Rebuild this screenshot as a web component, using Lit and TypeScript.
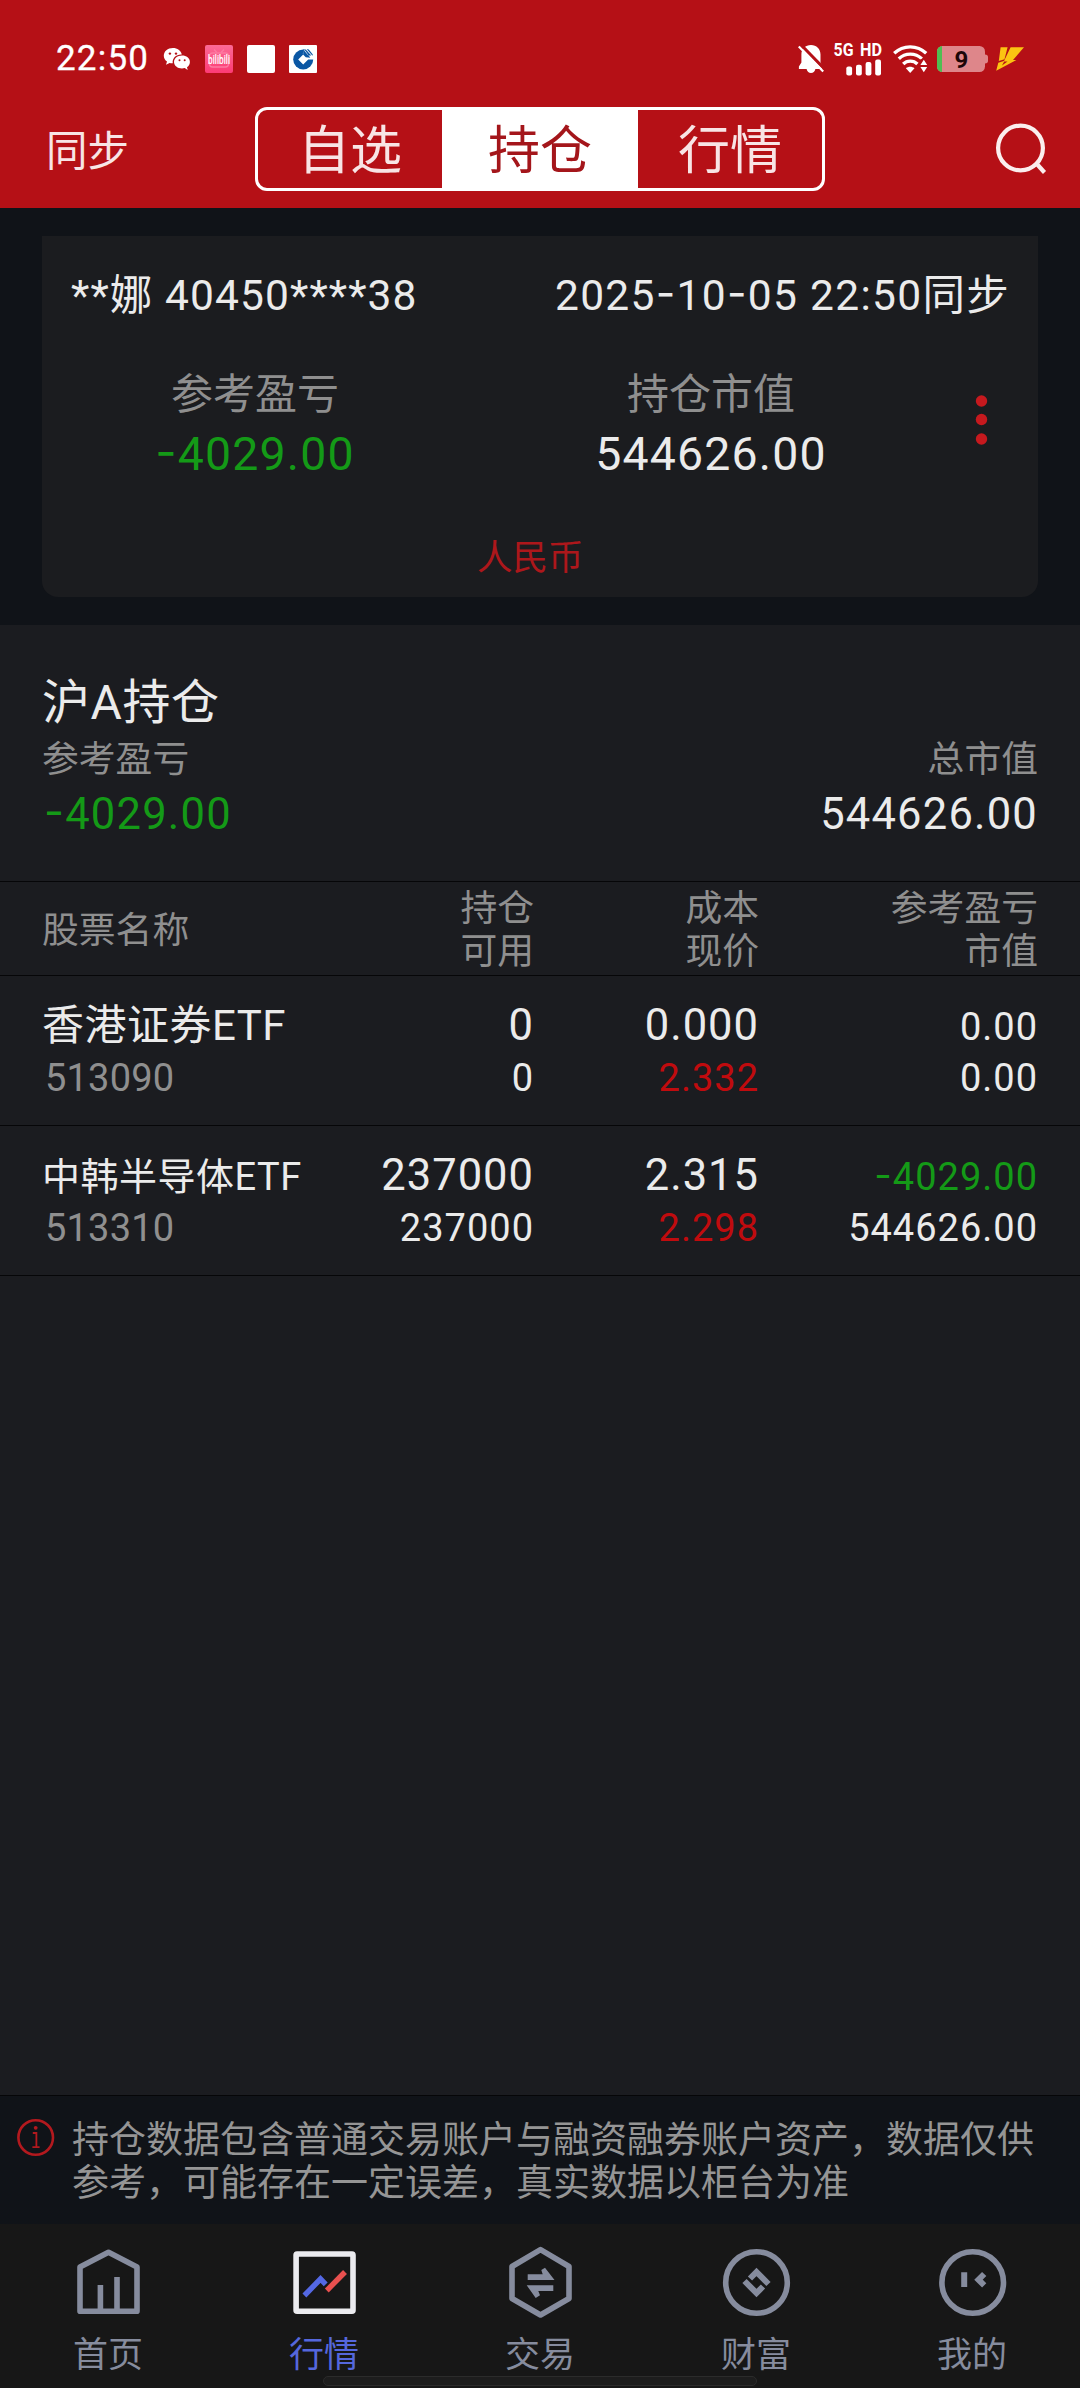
import { LitElement, html, css, svg } from "lit";
import { customElement, property } from "lit/decorators.js";
import { classMap } from "lit/directives/class-map.js";

const shared = css`
  :host,
  * {
    box-sizing: border-box;
  }
  svg {
    display: block;
    flex: none;
    overflow: visible;
  }
  .minus {
    font-family: Inter, Roboto, sans-serif;
    vertical-align: 0.04em;
    line-height: 0;
  }
  .fall {
    color: #149a17;
  }
  .rise {
    color: #c00b0e;
  }
`;

/** Sets hyphens in the wider dash that figures use. */
const figures = (text: string) =>
  text.split(/(-)/).map((part) => (part === "-" ? html`<span class="minus">-</span>` : part));

@customElement("status-bar")
class StatusBar extends LitElement {
  static styles = [
    shared,
    css`
      :host {
        display: flex;
        align-items: center;
        height: 100px;
        padding: 17px 56px 0 56px;
        color: #fff;
      }
      .time {
        font-size: 35px;
        letter-spacing: 1.2px;
        line-height: 40px;
        width: 107px;
        padding-top: 1px;
        -webkit-text-stroke: 0.3px #fff;
      }
      .apps {
        display: flex;
        align-items: center;
        gap: 14px;
      }
      .system {
        display: flex;
        align-items: center;
        margin-left: auto;
      }
      .net {
        margin-left: 9px;
      }
      .wifi {
        margin-left: 10px;
      }
      .battery {
        margin-left: 9px;
      }
      .bolt {
        margin-left: 8px;
      }
    `,
  ];

  render() {
    return html`
      <div class="time">22:50</div>
      <div class="apps">
        <svg width="28" height="28" viewBox="0 0 28 28">
          <path fill="#fff" d="M9.900 3C4.700 3 .8 6.400 .8 10.700c0 2.500 1.200 4.500 3.200 5.900l-1 3.200 3.600-1.900c1.100.3 2.200.5 3.200.4-.9-5.100 3.400-9.200 9-8.900C18 5.600 14.300 3 9.900 3z"/>
          <path fill="#fff" d="M26.900 17c0-3.700-3.500-6.400-7.900-6.400s-8 2.800-8 6.400 3.600 6.500 8 6.500c.9 0 1.800-.2 2.700-.4l3 1.800-.7-2.700c1.800-1.200 2.900-3 2.900-5.200z"/>
          <g fill="#b51016"><circle cx="6.900" cy="8.600" r="1.200"/><circle cx="13" cy="8.600" r="1.200"/><circle cx="16.500" cy="15.300" r="1"/><circle cx="21.700" cy="15.300" r="1"/></g>
        </svg>
        <svg width="28" height="28" viewBox="0 0 28 28">
          <defs><linearGradient id="p" x1="0" y1="0" x2="0" y2="1"><stop offset="0" stop-color="#fb6a95"/><stop offset="1" stop-color="#fd3b75"/></linearGradient></defs>
          <rect width="28" height="28" rx="2" fill="url(#p)"/>
          <g fill="none" stroke="#fd7aa1" stroke-width="1.300"><rect x="4.500" y="8" width="19" height="14" rx="3"/><path d="M9 4.500l3 3M19 4.500l-3 3"/></g>
          <text x="3" y="19" textLength="22" lengthAdjust="spacingAndGlyphs" font-family="Roboto, sans-serif" font-weight="500" font-size="12" fill="#fff">bilibili</text>
        </svg>
        <svg width="28" height="28" viewBox="0 0 28 28"><rect width="28" height="28" rx="2" fill="#fff"/></svg>
        <svg width="28" height="28" viewBox="0 0 28 28">
          <rect width="28" height="28" rx="1" fill="#fff"/>
          <circle cx="14.200" cy="14.500" r="10" fill="#0a57a4"/>
          <path fill="#fff" d="M14.200 9.600l5 5-5 5-5-5zM17 12.200l-3.200-3.800L15.500 3h11v11.400H19z"/>
          <path fill="#0a57a4" d="M14.300 4.500l2.400-.1 5.600 6.200h-3z M17.600 4.100l2.200.5 4 4.800-.3 1.300z M14.200 4.500v5l2.600 2.700 4.500.6-5-7z"/>
        </svg>
      </div>
      <div class="system">
        <svg width="26" height="30" viewBox="0 0 26 30">
          <path fill="#fff" d="M13 1c-5.500 0-9.600 4-9.600 9.400v8.200L.9 22.600v2.300h7.700c.6 2.400 2.200 4.100 4.400 4.100s3.800-1.700 4.400-4.100h7.200v-2.300l-2.100-4v-8.200C22.500 5 18.500 1 13 1z"/>
          <path stroke="#b51016" stroke-width="3" d="M2.800 .6l24 24.800"/>
          <path stroke="#fff" stroke-width="2.200" d="M.8 2.600l24.400 24.800"/>
        </svg>
        <svg class="net" width="50" height="36" viewBox="0 0 50 36">
          <text x=".5" y="14.800" textLength="20" lengthAdjust="spacingAndGlyphs" font-family="Roboto, sans-serif" font-weight="700" font-size="18.500" fill="#fff">5G</text>
          <text x="27" y="14.800" textLength="22" lengthAdjust="spacingAndGlyphs" font-family="Roboto, sans-serif" font-weight="700" font-size="18.500" fill="#fff">HD</text>
          <g fill="#fff"><rect x="13.300" y="25.500" width="5.800" height="9" rx="2"/><rect x="23" y="23.700" width="5.800" height="10.800" rx="2"/><rect x="32.600" y="21.100" width="5.800" height="13.400" rx="2"/><rect x="42.200" y="18.500" width="5.800" height="16" rx="2"/></g>
        </svg>
        <svg class="wifi" width="35" height="28" viewBox="0 0 35 28">
          <g fill="none" stroke="#fff" stroke-width="3.300"><path d="M1.200 8.300a23 23 0 0 1 32 0"/><path d="M5.800 13.800a16.500 16.500 0 0 1 23 0"/><path d="M10.200 19a10 10 0 0 1 14.200 0"/></g>
          <path fill="#fff" d="M17.200 28l-4.300-4.800c2.500-2 6.100-2 8.600 0z"/>
          <path d="M26.500 28V14.500l9-1v14.500z" fill="#b51016"/>
          <path fill="#fff" d="M30.800 14.800l3.400 5.200h-6.800zM30.800 27.200l3.400-5.200h-6.800z"/>
        </svg>
        <svg class="battery" width="51" height="26" viewBox="0 0 51 26">
          <defs><clipPath id="b"><rect width="48" height="26" rx="5.500"/></clipPath></defs>
          <g clip-path="url(#b)"><rect width="48" height="26" fill="#de868a"/><rect width="5" height="26" fill="#4fbe52"/></g>
          <path d="M48 8.500c2 0 3 1 3 2.500v4c0 1.500-1 2.500-3 2.500z" fill="#de868a"/>
          <text x="24.400" y="22" text-anchor="middle" font-family="Roboto, sans-serif" font-weight="700" font-size="24" fill="#1d0608">9</text>
        </svg>
        <svg class="bolt" width="28" height="24" viewBox="0 0 28 24">
          <path fill="#fbc412" d="M4.600 .3h7L8.500 12.200 2.800 14zM14.600 .3H28L17 13h3.400L.2 23.700 2.300 15.700l6.300-2L6 18.400l5.500-4H7.800z"/>
        </svg>
      </div>
    `;
  }
}

@customElement("app-header")
class AppHeader extends LitElement {
  static styles = [
    shared,
    css`
      :host {
        display: flex;
        align-items: center;
        height: 108px;
        padding: 0 33px 10px 46px;
        color: #f8e4e5;
      }
      .sync {
        width: 209px;
        font-size: 41.500px;
        line-height: 60px;
        padding-top: 5px;
      }
      .segments {
        display: grid;
        grid-template-columns: 184px 196px 184px;
        height: 84px;
        border: 3px solid #fff;
        border-radius: 12px;
        overflow: hidden;
      }
      .segment {
        padding-top: 2px;
        font-size: 52px;
        line-height: 80px;
        text-align: center;
        white-space: nowrap;
      }
      .on {
        background: #fff;
        color: #a4161b;
      }
      .search {
        margin-left: auto;
      }
    `,
  ];

  render() {
    return html`
      <div class="sync">同步</div>
      <div class="segments">
        ${["自选", "持仓", "行情"].map(
          (name, i) => html`<div class=${classMap({ segment: true, on: i === 1 })}>${name}</div>`
        )}
      </div>
      <svg class="search" width="52" height="52" viewBox="0 0 52 52" fill="none" stroke="#fbeeee" stroke-width="4.200">
        <circle cx="25.500" cy="25" r="22.400" />
        <path d="M41 40l8.500 9.500" />
      </svg>
    `;
  }
}

@customElement("account-card")
class AccountCard extends LitElement {
  static styles = [
    shared,
    css`
      :host {
        display: block;
        height: 417px;
        padding: 28px 42px;
        background: #101318;
      }
      .card {
        height: 361px;
        background: #1b1c1f;
        border-radius: 0 0 16px 16px;
        display: flex;
        flex-direction: column;
      }
      .title {
        display: flex;
        justify-content: space-between;
        padding: 34px 28px 0 29px;
        font-size: 42.500px;
        letter-spacing: 1.1px;
        line-height: 52px;
        color: #ebebeb;
        white-space: nowrap;
      }
      .stamp {
        letter-spacing: 1.3px;
      }
      .totals {
        display: grid;
        grid-template-columns: 426px 486px auto;
        padding-top: 44px;
        text-align: center;
      }
      .label {
        font-size: 42px;
        line-height: 58px;
        color: #8f8f8f;
      }
      .value {
        font-size: 46.400px;
        letter-spacing: 1.2px;
        line-height: 60px;
        color: #ebebeb;
      }
      .value.fall {
        color: #149a17;
      }
      .more {
        margin: 28px 0 0 21px;
      }
      .currency {
        margin: 50px 0 0 435px;
        font-size: 35.500px;
        line-height: 48px;
        color: #ad171b;
      }
    `,
  ];

  render() {
    return html`
      <div class="card">
        <div class="title">
          <span>**娜 40450****38</span>
          <span class="stamp">${figures("2025-10-05 22:50同步")}</span>
        </div>
        <div class="totals">
          <div>
            <div class="label">参考盈亏</div>
            <div class="value fall">${figures("-4029.00")}</div>
          </div>
          <div>
            <div class="label">持仓市值</div>
            <div class="value">544626.00</div>
          </div>
          <svg class="more" width="13" height="52" viewBox="0 0 13 52" fill="#c6191e">
            <circle cx="6.500" cy="7" r="5.700" /><circle cx="6.500" cy="25.500" r="5.700" /><circle cx="6.500" cy="45" r="5.700" />
          </svg>
        </div>
        <div class="currency">人民币</div>
      </div>
    `;
  }
}

@customElement("market-summary")
class MarketSummary extends LitElement {
  static styles = [
    shared,
    css`
      :host {
        display: block;
        height: 257px;
        padding: 51px 42px 0;
        border-bottom: 1px solid #060608;
        white-space: nowrap;
      }
      .name {
        font-size: 48px;
        letter-spacing: 0.6px;
        line-height: 54px;
        color: #ebebeb;
      }
      .line {
        display: flex;
        justify-content: space-between;
      }
      .labels {
        padding-top: 6px;
        font-size: 36.800px;
        line-height: 48px;
        color: #8f8f8f;
      }
      .values {
        padding: 2px 0 0 2px;
        font-size: 43.500px;
        letter-spacing: 1.2px;
        line-height: 58px;
        color: #ebebeb;
      }
    `,
  ];

  render() {
    return html`
      <div class="name">沪A持仓</div>
      <div class="line labels"><span>参考盈亏</span><span>总市值</span></div>
      <div class="line values"><span class="fall">${figures("-4029.00")}</span><span>544626.00</span></div>
    `;
  }
}

interface Holding {
  name: string;
  code: string;
  amount: string;
  usable: string;
  cost: string;
  price: string;
  profit: string;
  value: string;
  long?: boolean;
}

const HOLDINGS: Holding[] = [
  { name: "香港证券ETF", code: "513090", amount: "0", usable: "0", cost: "0.000", price: "2.332", profit: "0.00", value: "0.00" },
  { name: "中韩半导体ETF", code: "513310", amount: "237000", usable: "237000", cost: "2.315", price: "2.298", profit: "-4029.00", value: "544626.00", long: true },
];

@customElement("holdings-table")
class HoldingsTable extends LitElement {
  static styles = [
    shared,
    css`
      :host {
        display: block;
        white-space: nowrap;
      }
      .head,
      .row {
        display: grid;
        grid-template-columns: 290px 202px 225px 279px;
        padding: 0 42px;
        text-align: right;
        border-bottom: 1px solid #060608;
      }
      .head {
        height: 94px;
        padding-top: 3px;
        align-items: center;
        font-size: 36.800px;
        line-height: 43px;
        color: #8f8f8f;
      }
      .left {
        text-align: left;
      }
      .row {
        height: 150px;
        padding-top: 25px;
        row-gap: 1px;
        align-items: baseline;
        align-content: start;
        color: #ebebeb;
        font-size: 38px;
        line-height: 50px;
        letter-spacing: 1px;
      }
      .big {
        font-size: 43.500px;
      }
      .name {
        font-size: 42px;
        letter-spacing: 0.5px;
      }
      .name.long {
        font-size: 38px;
      }
      .code {
        padding-left: 3px;
        color: #8f8f8f;
        letter-spacing: 0.2px;
      }
    `,
  ];

  render() {
    return html`
      <div class="head">
        <div class="left">股票名称</div>
        <div>持仓<br />可用</div>
        <div>成本<br />现价</div>
        <div>参考盈亏<br />市值</div>
      </div>
      ${HOLDINGS.map(
        (h) => html`
          <div class="row">
            <div class=${classMap({ left: true, name: true, long: !!h.long })}>${h.name}</div>
            <div class="big">${h.amount}</div>
            <div class="big">${h.cost}</div>
            <div class=${classMap({ fall: h.profit.startsWith("-") })}>${figures(h.profit)}</div>
            <div class="left code">${h.code}</div>
            <div>${h.usable}</div>
            <div class="rise">${h.price}</div>
            <div>${h.value}</div>
          </div>
        `
      )}
    `;
  }
}

@customElement("notice-bar")
class NoticeBar extends LitElement {
  static styles = [
    shared,
    css`
      :host {
        display: flex;
        height: 129px;
        border-top: 1px solid #060608;
        background: #101318;
        padding: 22px 0 0 17px;
      }
      .text {
        width: 965px;
        margin-left: 17px;
        padding-top: 1px;
        font-size: 37px;
        line-height: 43px;
        color: #959595;
      }
    `,
  ];

  render() {
    return html`
      <svg width="38" height="39" viewBox="0 0 38 39">
        <circle cx="18.700" cy="19.500" r="17.300" fill="none" stroke="#b3191e" stroke-width="2.600" />
        <circle cx="18.700" cy="9.800" r="1.900" fill="#b3191e" />
        <path d="M15.800 15h3.600v13.800M15.400 29.200h7.200" fill="none" stroke="#b3191e" stroke-width="1.800" />
      </svg>
      <div class="text">持仓数据包含普通交易账户与融资融券账户资产，数据仅供参考，可能存在一定误差，真实数据以柜台为准</div>
    `;
  }
}

const GREY = "#868c9e";

const TABS = [
  {
    label: "首页",
    icon: svg`<g fill="none" stroke=${GREY} stroke-width="5.600">
      <path stroke-linejoin="round" d="M8 21 36.500 6.200 65 21v44.200H8z"/><path d="M28.400 39v25M45 31v33"/></g>`,
  },
  {
    label: "行情",
    icon: svg`<g fill="none" stroke-width="5.400">
      <rect x="8.100" y="8" width="56.900" height="57.300" rx="1" stroke="#ebebef" stroke-width="5.600"/>
      <path stroke="#5468e4" d="M16.400 49.500 32.500 33l5.200 5.400"/><path stroke="#e8504f" d="M38.800 44.500 57 26"/></g>`,
  },
  {
    label: "交易",
    icon: svg`<path fill="none" stroke=${GREY} stroke-width="5.600" stroke-linejoin="round" d="M8 20.500 36.500 3.700 65 20.500v32L36.500 69 8 52.500z"/>
      <path fill=${GREY} d="M23.700 28.300h15L37.300 24l3.700-2.300L50.500 34H23.700zM49.300 45h-15l1.700 4.300-4.300 2.700-9-12.700h26.600z"/>`,
  },
  {
    label: "财富",
    icon: svg`<g fill="none" stroke=${GREY} stroke-width="5.600"><circle cx="36.500" cy="36.500" r="30.800"/>
      <path stroke-width="6" d="M30 32.500 36.500 26l12 12M24.500 35l12 12 6.500-6.500"/></g>`,
  },
  {
    label: "我的",
    icon: svg`<g fill="none" stroke=${GREY} stroke-width="5.600"><circle cx="36.700" cy="36.500" r="30.800"/>
      <path stroke-width="6" d="M28.200 26.300V41M48.200 28 42.500 33.700l5.700 5.600"/></g>`,
  },
];

@customElement("tab-bar")
class TabBar extends LitElement {
  @property({ type: Number }) active = 1;

  static styles = [
    shared,
    css`
      :host {
        display: grid;
        grid-template-columns: repeat(5, 1fr);
        height: 164px;
        background: #171717;
        position: relative;
      }
      .tab {
        display: flex;
        flex-direction: column;
        align-items: center;
        padding-top: 22px;
        color: #868c9e;
        font-size: 35px;
        line-height: 46px;
      }
      .on {
        color: #5567dd;
      }
      .label {
        margin-top: 14px;
        height: 46px;
      }
      .handle {
        position: absolute;
        left: 323px;
        top: 152px;
        width: 434px;
        height: 10px;
        border-radius: 5px;
        background: #1d1d1d;
        border: 1px solid #2b2b2b;
      }
    `,
  ];

  render() {
    return html`
      ${TABS.map(
        (t, i) => html`
          <div class=${classMap({ tab: true, on: i === this.active })}>
            <svg width="72" height="73" viewBox="0 0 72 73">${t.icon}</svg>
            <div class="label">${t.label}</div>
          </div>
        `
      )}
      <div class="handle"></div>
    `;
  }
}

@customElement("app-root")
class AppRoot extends LitElement {
  static styles = css`
    :host {
      display: flex;
      flex-direction: column;
      width: 1080px;
      height: 2388px;
      overflow: hidden;
      background: #1b1c20;
      font-family: Roboto, "Noto Sans CJK SC", sans-serif;
    }
    .top {
      height: 208px;
      background: #b51016;
    }
    .grow {
      flex: 1;
    }
  `;

  render() {
    return html`
      <div class="top">
        <status-bar></status-bar>
        <app-header></app-header>
      </div>
      <account-card></account-card>
      <market-summary></market-summary>
      <holdings-table></holdings-table>
      <div class="grow"></div>
      <notice-bar></notice-bar>
      <tab-bar></tab-bar>
    `;
  }
}
